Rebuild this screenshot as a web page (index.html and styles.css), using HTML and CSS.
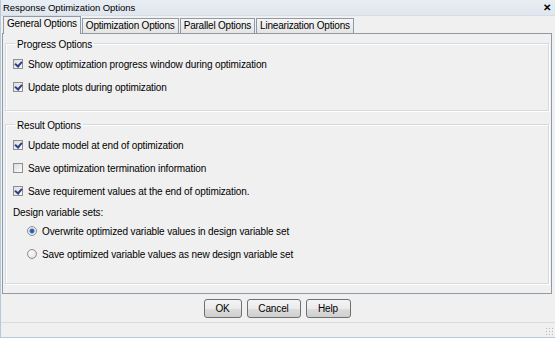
FILE: index.html
```html
<!DOCTYPE html>
<html lang="en">
<head>
    <meta charset="UTF-8">
    <title>Response Optimization Options</title>
    <link rel="stylesheet" href="styles.css">
</head>
<body>
    <div class="window">
        <div class="titlebar">
            <span class="title">Response Optimization Options</span>
            <span class="close">&#x2715;</span>
        </div>
        <div class="tabs">
            <div class="tab active">General Options</div>
            <div class="tab">Optimization Options</div>
            <div class="tab">Parallel Options</div>
            <div class="tab">Linearization Options</div>
        </div>
        <div class="panel">
            <fieldset class="group progress">
                <legend>Progress Options</legend>
                <label class="row"><span class="check on"></span>Show optimization progress window during optimization</label>
                <label class="row"><span class="check on"></span>Update plots during optimization</label>
            </fieldset>
            <fieldset class="group result">
                <legend>Result Options</legend>
                <label class="row"><span class="check on"></span>Update model at end of optimization</label>
                <label class="row"><span class="check"></span>Save optimization termination information</label>
                <label class="row"><span class="check on"></span>Save requirement values at the end of optimization.</label>
                <div class="caption">Design variable sets:</div>
                <label class="row radio-row"><span class="radio on"></span>Overwrite optimized variable values in design variable set</label>
                <label class="row radio-row"><span class="radio"></span>Save optimized variable values as new design variable set</label>
            </fieldset>
        </div>
        <div class="footer">
            <button class="btn ok">OK</button>
            <button class="btn cancel">Cancel</button>
            <button class="btn help">Help</button>
        </div>
        <div class="statusbar">
            <span class="grip"></span>
        </div>
    </div>
</body>
</html>
```
FILE: styles.css
```css
* {
    box-sizing: border-box;
}
body {
    margin: 0;
    font-family: "Liberation Sans", Arial, sans-serif;
    font-size: 10px;
    letter-spacing: -0.13px;
    color: #000;
    background: #f0f0f0;
}
.window {
    width: 555px;
    height: 338px;
    background: #f0f0f0;
    border-left: 1px solid #b9c9da;
    border-bottom: 1px solid #b9c9da;
    display: flex;
    flex-direction: column;
}
.titlebar {
    height: 16px;
    display: flex;
    justify-content: space-between;
    align-items: center;
    padding: 0 4px 0 2px;
    background: linear-gradient(#e9eef4, #dfe6ee);
    border-bottom: 1px solid #d6dde6;
}
.title {
    font-size: 9.5px;
    letter-spacing: -0.05px;
}
.close {
    font-size: 10px;
    font-weight: bold;
}
.tabs {
    display: flex;
    align-items: flex-end;
    height: 17px;
    padding-left: 2px;
    gap: 1px;
}
.tab {
    height: 15px;
    line-height: 14px;
    padding: 0 3px;
    letter-spacing: -0.2px;
    border: 1px solid #8e9aa5;
    border-bottom: none;
    background: linear-gradient(#f5f5f5, #e4e4e4);
}
.tab.active {
    height: 18px;
    background: #f0f0f0;
    position: relative;
    margin-bottom: -1px;
    padding: 0 3px;
    z-index: 1;
}
.panel {
    margin: 0 3px 0 1px;
    height: 261px;
    border: 1px solid #8e9aa5;
    padding: 0 2px;
}
.group {
    margin: 0;
    border: 1px solid #d3dbe2;
    box-shadow: inset 1px 1px 0 #fff, 1px 1px 0 #fff;
    padding: 0 0 0 7px;
}
.group legend {
    padding: 4px 2px 0;
    margin-left: 2px;
    line-height: 12px;
}
.progress {
    margin-top: 1px;
    padding-bottom: 13px;
}
.result {
    margin-top: 5px;
    padding-bottom: 19px;
}
.row {
    display: flex;
    align-items: center;
    height: 20px;
    margin-top: 3px;
}
.check {
    width: 10px;
    height: 10px;
    margin-right: 5px;
    border: 1px solid #8f8f8f;
    background: linear-gradient(135deg, #dcdcdc, #fbfbfb);
    position: relative;
}
.check.on::after {
    content: "";
    position: absolute;
    left: 2px;
    top: 0px;
    width: 3px;
    height: 5px;
    border: solid #2a3f8c;
    border-width: 0 2px 2px 0;
    transform: rotate(40deg);
}
.caption {
    height: 16px;
    line-height: 16px;
    margin-top: 4px;
}
.radio-row {
    padding-left: 14px;
}
.caption + .radio-row {
    margin-top: 0;
}
.radio-row + .radio-row {
    margin-top: 3px;
}
.radio {
    width: 10px;
    height: 10px;
    margin-right: 5px;
    border-radius: 50%;
    border: 1px solid #8f8f8f;
    background: radial-gradient(circle at 40% 40%, #fff, #d6d6d6);
}
.radio.on {
    background: radial-gradient(circle, #1d4f9c 0, #3a74c6 2px, #e8e8e8 3px, #f6f6f6);
}
.footer {
    height: 29px;
    display: flex;
    justify-content: center;
    align-items: center;
    gap: 5px;
    padding-right: 2px;
    border-bottom: 1px solid #dadde0;
}
.btn {
    height: 19px;
    font-family: inherit;
    font-size: 10px;
    letter-spacing: inherit;
    border: 1px solid #707070;
    border-radius: 3px;
    background: linear-gradient(#f4f4f4 0, #ebebeb 50%, #dddddd 51%, #cfcfcf);
    padding: 0;
}
.ok {
    width: 38px;
}
.cancel {
    width: 54px;
}
.help {
    width: 45px;
}
.statusbar {
    flex: 1;
    display: flex;
    justify-content: flex-end;
    align-items: flex-end;
}
.grip {
    width: 8px;
    height: 8px;
    margin: 0 2px 2px 0;
    background: radial-gradient(circle, #b3b7bd 40%, transparent 45%) 0 0 / 3px 3px;
}
```
